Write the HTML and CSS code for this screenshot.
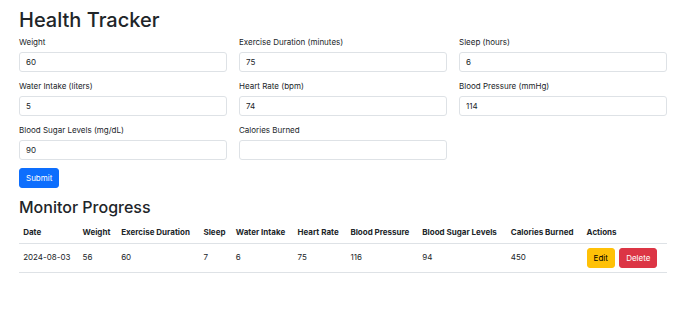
FILE: index.html
```html
<!doctype html>
<html lang="en">
<head>
  <meta charset="utf-8">
  <title>Health Tracker</title>
  <meta name="viewport" content="width=device-width, initial-scale=1">
  <link rel="stylesheet" href="styles.css">
</head>
<body>
  <div class="container">
    <h1>Health Tracker</h1>
    <form class="entry-form" onsubmit="return false">
      <div class="field">
        <label for="weight">Weight</label>
        <input id="weight" type="number" value="60">
      </div>
      <div class="field">
        <label for="exercise">Exercise Duration (minutes)</label>
        <input id="exercise" type="number" value="75">
      </div>
      <div class="field">
        <label for="sleep">Sleep (hours)</label>
        <input id="sleep" type="number" value="6">
      </div>
      <div class="field">
        <label for="water">Water Intake (liters)</label>
        <input id="water" type="number" value="5">
      </div>
      <div class="field">
        <label for="heart">Heart Rate (bpm)</label>
        <input id="heart" type="number" value="74">
      </div>
      <div class="field">
        <label for="pressure">Blood Pressure (mmHg)</label>
        <input id="pressure" type="number" value="114">
      </div>
      <div class="field">
        <label for="sugar">Blood Sugar Levels (mg/dL)</label>
        <input id="sugar" type="number" value="90">
      </div>
      <div class="field">
        <label for="calories">Calories Burned</label>
        <input id="calories" type="number" value="">
      </div>
      <div class="form-actions">
        <button class="btn btn-primary" type="submit">Submit</button>
      </div>
    </form>

    <h2>Monitor Progress</h2>
    <table class="table">
      <thead>
        <tr>
          <th>Date</th><th>Weight</th><th>Exercise Duration</th><th>Sleep</th><th>Water Intake</th>
          <th>Heart Rate</th><th>Blood Pressure</th><th>Blood Sugar Levels</th><th>Calories Burned</th><th>Actions</th>
        </tr>
      </thead>
      <tbody>
        <tr>
          <td>2024-08-03</td><td>56</td><td>60</td><td>7</td><td>6</td>
          <td>75</td><td>116</td><td>94</td><td>450</td>
          <td class="actions">
            <button class="btn btn-warning">Edit</button>
            <button class="btn btn-danger">Delete</button>
          </td>
        </tr>
      </tbody>
    </table>
  </div>
</body>
</html>
```

FILE: styles.css
```css
:root {
  --text: #212529;
  --border: #dee2e6;
  --primary: #0d6efd;
  --warning: #ffc107;
  --danger: #dc3545;
}
* { box-sizing: border-box; }
body {
  margin: 0;
  font-family: Inter, "Noto Sans", sans-serif;
  font-size: 8px;
  line-height: 12.6px;
  color: var(--text);
  background: #fff;
}
.container { padding: 8px 19px 0; }

h1, h2 { font-weight: 500; line-height: 1.2; margin: 0 0 4.2px; }
h1 { font-size: 20px; }
h2 { font-size: 16px; margin-top: 10px; }

.entry-form {
  display: grid;
  grid-template-columns: repeat(3, 1fr);
  column-gap: 12px;
}
.field { margin-bottom: 8px; }
.field label { display: block; line-height: 12px; margin-bottom: 4px; }
.field input {
  display: block;
  width: 100%;
  height: 20px;
  padding: 0 6px;
  font: inherit;
  color: var(--text);
  border: 1px solid var(--border);
  border-radius: 3px;
  background: #fff;
  -moz-appearance: textfield;
}
.field input::-webkit-outer-spin-button,
.field input::-webkit-inner-spin-button { -webkit-appearance: none; margin: 0; }
.form-actions { grid-column: 1 / -1; }

.btn {
  display: inline-block;
  height: 20px;
  font: inherit;
  line-height: 12px;
  padding: 3px 6px;
  border: 1px solid transparent;
  border-radius: 3px;
  cursor: pointer;
}
.btn-primary { background: var(--primary); border-color: var(--primary); color: #fff; }
.btn-warning { background: var(--warning); border-color: var(--warning); color: #000; }
.btn-danger { background: var(--danger); border-color: var(--danger); color: #fff; }

.table {
  width: 100%;
  border-collapse: collapse;
  vertical-align: top;
}
.table th, .table td {
  text-align: left;
  padding: 4.2px;
  border-bottom: 1px solid var(--border);
}
.table th { font-weight: 700; }
.table td.actions { white-space: nowrap; }
.table td.actions .btn + .btn { margin-left: 2px; }
```
